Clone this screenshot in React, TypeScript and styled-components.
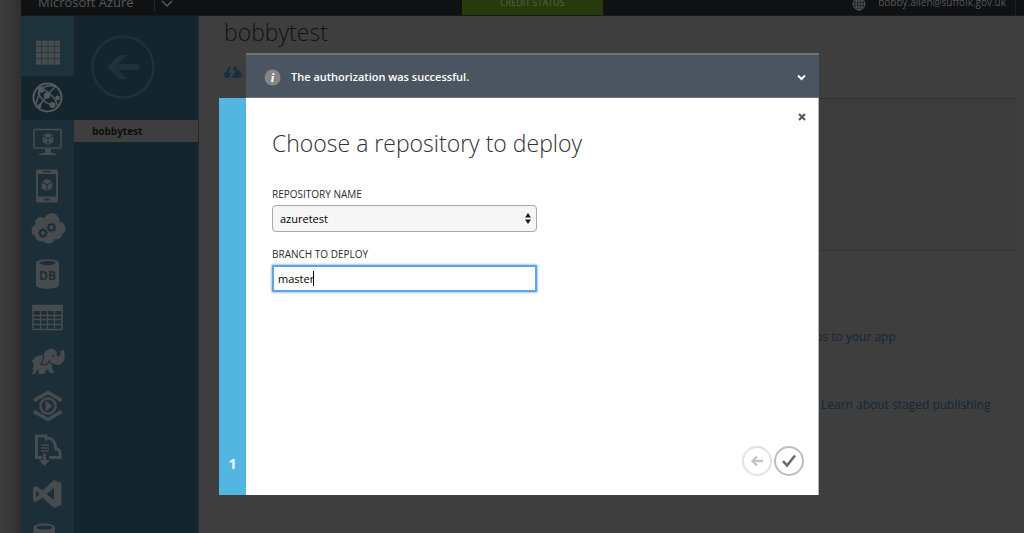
import React from "react";
import styled, { createGlobalStyle, css } from "styled-components";

const sans = `"Open Sans", "Noto Sans", sans-serif`;

const GlobalStyle = createGlobalStyle`
  *, *::before, *::after { box-sizing: border-box; }
  html, body, #root { height: 100%; }
  body {
    margin: 0;
    overflow: hidden;
    background: #3e3e3e;
    font-family: ${sans};
    font-size: 11px;
  }
  h1, h2, p, ul { margin: 0; padding: 0; font-weight: 400; }
  ul { list-style: none; }
  button { border: 0; padding: 0; background: none; font: inherit; color: inherit; }
  svg { display: block; }
`;

/* ---------- portal behind the dialog ---------- */

const Page = styled.div`
  display: flex;
  height: 100vh;
  overflow: hidden;
`;

const Gutter = styled.div`
  flex: 0 0 21px;
  background: linear-gradient(to right, #3c3c3c, #393939 40%, #2f2f2f);
`;

const Portal = styled.div`
  flex: 1;
  min-width: 0;
  display: flex;
  flex-direction: column;
`;

const TopBar = styled.header`
  display: grid;
  grid-template-columns: 16fr 141px 15fr;
  flex: 0 0 40px;
  margin-top: -24px;
  padding-right: 8px;
  background: #0f1113;
  border-bottom: 1px solid #17191b;
  color: #55585a;
`;

const BarGroup = styled.div<{ $end?: boolean }>`
  display: flex;
  align-items: flex-end;
  justify-content: ${(p) => (p.$end ? "flex-end" : "flex-start")};
  gap: 12px;
  padding: ${(p) => (p.$end ? "0 9px 4px 0" : "0 0 4px 17px")};
  border-right: ${(p) => (p.$end ? "1px solid #1d1f21" : "0")};
`;

const Brand = styled.span`
  font-size: 13px;
  line-height: 18px;
  margin-right: 8px;
`;

const Divider = styled.span`
  width: 1px;
  height: 18px;
  background: #24282b;
`;

const BarButton = styled.button`
  margin-left: -6px;
  padding-bottom: 3px;
`;

const Account = styled.span`
  font-size: 10px;
  line-height: 18px;
`;

const Credit = styled.button`
  display: flex;
  align-items: flex-end;
  justify-content: center;
  padding-bottom: 4px;
  background: #263a0c;
  color: #566344;
  font-size: 9px;
  line-height: 16px;
`;

const Columns = styled.div`
  flex: 1;
  min-height: 0;
  display: flex;
`;

const Rail = styled.nav`
  flex: 0 0 53px;
  background: #1c2f38;
  overflow: hidden;
`;

const RailButton = styled.button<{ $active?: boolean; $first?: boolean }>`
  display: flex;
  align-items: center;
  justify-content: center;
  width: 100%;
  height: ${(p) => (p.$first ? 60 : 44)}px;
  padding-top: ${(p) => (p.$first ? 14 : 0)}px;
  color: ${(p) => (p.$active ? "#55595b" : "#474b4d")};
  background: ${(p) => (p.$active ? "#14252e" : p.$first ? "#1e323c" : "transparent")};
`;

const SiteList = styled.div`
  flex: 0 0 124px;
  background: #14252e;
  border-right: 1px solid #1c2b33;
`;

const BackArea = styled.div`
  display: flex;
  justify-content: center;
  height: 104px;
  padding: 19px 26px 0 0;
  color: #1e323c;
`;

const SiteRow = styled.a`
  display: block;
  width: 124px;
  height: 22px;
  padding-left: 18px;
  background: #3e3e3e;
  color: #0e0e0e;
  font-size: 10px;
  font-weight: 700;
  line-height: 22px;
  text-decoration: none;
`;

const Content = styled.main`
  flex: 1;
  min-width: 0;
  padding: 0 8px 0 25px;
`;

const SiteTitle = styled.h1`
  font-size: 23px;
  font-weight: 300;
  line-height: 32px;
  color: #121212;
`;

const Tabs = styled.div`
  display: flex;
  align-items: flex-start;
  height: 50px;
  padding-top: 18px;
  color: #17303f;
`;

const Panel = styled.section`
  height: 153px;
  border: solid #333333;
  border-width: 1px 0;
  background: #3c3c3c;
`;

const LinkRow = styled.p<{ $indent: number; $top: number }>`
  padding: ${(p) => p.$top}px 0 0 ${(p) => p.$indent}px;
  white-space: nowrap;
  font-size: 12px;
  line-height: 18px;

  a { color: #14273a; text-decoration: none; }
`;

/* ---------- dialog ---------- */

const Overlay = styled.div`
  position: fixed;
  inset: 0;
  display: flex;
  align-items: flex-start;
  justify-content: center;
  padding: 53px 8px 0 22px;
`;

const Dialog = styled.section`
  display: grid;
  grid-template-columns: 27px 1fr;
  grid-template-rows: 45px 397px;
  width: 60%;
  min-width: 600px;
`;

const Notice = styled.div`
  grid-column: 2;
  display: flex;
  align-items: center;
  gap: 10px;
  padding: 2px 13px 0 18px;
  border-top: 2px solid #6f7071;
  border-bottom: 1px solid #6d7681;
  background: #4a5561;
  color: #ffffff;
`;

const NoticeText = styled.p`
  flex: 1;
  font-size: 11px;
  font-weight: 600;
  line-height: 16px;
`;

const StepStrip = styled.div`
  display: flex;
  align-items: flex-end;
  justify-content: center;
  padding-bottom: 21px;
  background: #52b6e1;
  color: #e9f6fc;
  font-size: 15px;
  font-weight: 700;
  line-height: 22px;
`;

const Body = styled.form`
  display: flex;
  flex-direction: column;
  padding: 14px 11px 19px 26px;
  border-right: 1px solid #b4b4b4;
  background: #ffffff;
`;

const CloseButton = styled.button`
  align-self: flex-end;
  width: 10px;
  height: 10px;
  color: #555555;
`;

const Heading = styled.h2`
  margin-bottom: 24px;
  font-size: 23px;
  font-weight: 300;
  line-height: 42px;
  color: #303030;
`;

const Field = styled.div`
  width: 265px;
  margin-bottom: 16px;
`;

const Label = styled.label`
  display: block;
  height: 17px;
  font-size: 10px;
  line-height: 12px;
  color: #2b2b2b;
`;

const control = css`
  display: block;
  width: 100%;
  height: 27px;
  margin: 0;
  font-family: ${sans};
  font-size: 11px;
  color: #000000;
`;

const ControlWrap = styled.div`
  position: relative;

  svg {
    position: absolute;
    right: 6px;
    top: 8px;
    pointer-events: none;
  }
`;

const Select = styled.select`
  ${control}
  appearance: none;
  padding: 0 20px 0 7px;
  border: 1px solid #a9a9a9;
  border-radius: 4px;
  background: #f6f6f6;
`;

const TextInput = styled.input`
  ${control}
  padding: 0 4px;
  border: 2px solid #5fa2e8;
  border-radius: 1px;
  outline: 0;
  background: #ffffff;
  box-shadow: 0 0 2px 1px #a9cdf4;
  caret-color: transparent;
`;

const Caret = styled.span`
  position: absolute;
  left: 41px;
  top: 6px;
  width: 1px;
  height: 15px;
  background: #000000;
`;

const Actions = styled.div`
  display: flex;
  justify-content: flex-end;
  gap: 2px;
  margin-top: auto;
  padding-right: 3px;
`;

const RoundButton = styled.button<{ $muted?: boolean }>`
  display: grid;
  place-items: center;
  width: 30px;
  height: 30px;
  border: 2px solid ${(p) => (p.$muted ? "#e2e2e2" : "#bdbdbd")};
  border-radius: 50%;
  color: ${(p) => (p.$muted ? "#c4c4c4" : "#6a6a6a")};
`;

/* ---------- drawings ---------- */

const Cube = ({ x, y, s = 1 }: { x: number; y: number; s?: number }) => (
  <g transform={`translate(${x} ${y}) scale(${s})`} fill="currentColor">
    <path d="M0-6 5-3.4 0-.8-5-3.4Z" />
    <path d="M-5.3-2.5-.5 0v5.8L-5.3 3.2Z" />
    <path d="M5.3-2.5.5 0v5.8L5.3 3.2Z" />
  </g>
);

const Icon = ({ children }: { children: React.ReactNode }) => (
  <svg width="36" height="36" viewBox="0 0 36 36" fill="none" aria-hidden="true">
    {children}
  </svg>
);

const GridIcon = () => (
  <Icon>
    {[0, 1, 2, 3].map((r) =>
      [0, 1, 2, 3].map((c) => (
        <rect key={`${r}${c}`} x={6 + c * 6.2} y={5.5 + r * 6.2} width="5.5" height="5.5" fill="currentColor" />
      ))
    )}
  </Icon>
);

const WebIcon = () => (
  <Icon>
    <circle cx="17.500" cy="17.500" r="14" stroke="currentColor" strokeWidth="2" />
    <g stroke="currentColor" strokeWidth="1.500">
      <path d="M11 9C17 10 26 17 28 28M11 9c4-3 10-4 15-2M10 11 6 24M8 12c2 7 8 12 15 13M17 15l8-8M16 17 9 26" />
    </g>
    <g fill="currentColor">
      <circle cx="11" cy="9.500" r="3.200" />
      <circle cx="17" cy="15.500" r="3.200" />
      <circle cx="27.500" cy="18" r="2.400" />
      <circle cx="22.500" cy="25" r="3" />
      <circle cx="9.500" cy="26" r="2.200" />
    </g>
  </Icon>
);

const MonitorIcon = () => (
  <Icon>
    <rect x="4" y="5.500" width="27" height="18.500" rx="1" stroke="currentColor" strokeWidth="1.600" />
    <Cube x={18} y={15} />
    <path d="M15 25h6v3c0 1 1 1.500 5 1.800V31H9v-1.200c5-.3 6-.8 6-1.800Z" fill="currentColor" />
  </Icon>
);

const PhoneIcon = () => (
  <Icon>
    <path
      fillRule="evenodd"
      fill="currentColor"
      d="M8 1.500h18a2 2 0 0 1 2 2v29a2 2 0 0 1-2 2H8a2 2 0 0 1-2-2v-29a2 2 0 0 1 2-2ZM8 6v22.500h18V6ZM13 3v1.200h8V3Zm1.500 27.500v2h5v-2Z"
    />
    <Cube x={17} y={17} />
  </Icon>
);

const Gear = ({ x, y }: { x: number; y: number }) => (
  <g transform={`translate(${x} ${y})`} stroke="#1c2f38">
    <circle r="3" strokeWidth="2" />
    <path d="M0-5v2M0 3v2M-5 0h2M3 0h2M-3.500-3.500-2-2M2 2l1.500 1.500M-3.500 3.500-2 2M2-2l1.500-1.500" strokeWidth="1.500" />
  </g>
);

const CloudGearsIcon = () => (
  <Icon>
    <path
      fill="currentColor"
      d="M5 24A6 6 0 0 1 5.500 13 5.500 5.500 0 0 1 14 6.500 8 8 0 0 1 29.500 10a6.500 6.500 0 0 1 3 12 6 6 0 0 1-7.500 5 7 7 0 0 1-12 2A6 6 0 0 1 5 24Z"
    />
    <Gear x={13} y={21} />
    <Gear x={21.5} y={15.500} />
  </Icon>
);

const DatabaseIcon = () => (
  <Icon>
    <path fill="currentColor" d="M6 7C6 2 29 2 29 7v22c0 5-23 5-23 0Z" />
    <ellipse cx="17.500" cy="7" rx="8" ry="2.200" fill="#1c2f38" />
    <text x="17.500" y="24" textAnchor="middle" fontFamily="Open Sans, sans-serif" fontSize="12" fontWeight="700" fill="#1c2f38">
      DB
    </text>
  </Icon>
);

const TableIcon = () => (
  <Icon>
    <rect x="3" y="5.500" width="29" height="24" stroke="currentColor" strokeWidth="1.500" />
    <path d="M2.500 5H33v6H2.500Z" fill="currentColor" />
    <path d="M3 15.500h29M3 19.500h29M3 24.500h29M10.500 11v18M17.500 11v18M24.500 11v18" stroke="currentColor" strokeWidth="1.300" />
  </Icon>
);

const ElephantIcon = () => (
  <Icon>
    <path
      fill="currentColor"
      d="M3 18c0-4 4-7 10-7 2-4 6-7 10-6 3 1 4 3 4 7 3 1 4-1 3-5l4-1c2 8 0 14-6 15-2 0-4-1-5-2l-1 4 2 6h-4l-3-4-3 5h-5l-1-5-3 5H2l2-5-2 1 2-5-3-6 2 1Z"
    />
    <path d="M14 11c-1 4-1 7-3 9 4 2 7 0 9-4M20 18c1 2 3 4 5 4" stroke="#1c2f38" strokeWidth="1.200" />
    <circle cx="23" cy="12" r="1" fill="#1c2f38" />
  </Icon>
);

const MediaIcon = () => (
  <Icon>
    <path d="M5.500 13.500V11.500L18 4.500l12 7v2M5.500 22.500v2l12.500 7 12-7v-2" stroke="currentColor" strokeWidth="3.600" />
    <circle cx="18" cy="18" r="7.600" stroke="currentColor" strokeWidth="2.400" />
    <path d="m15.500 12.500 7 5.500-7 5.500Z" fill="currentColor" />
  </Icon>
);

const ImportIcon = () => (
  <Icon>
    <path d="M16 8.500V4H6.500v21.500H12M17 6c6 0 8 4 9 11 3 0 4 2 4 4v4.500H19" stroke="currentColor" strokeWidth="3" />
    <path d="M11 13h8M11 16h8M11 19h8" stroke="currentColor" strokeWidth="1.700" />
    <path d="M13 21.500h3V28h4l-5.500 6L9 28h4Z" fill="currentColor" />
  </Icon>
);

const StudioIcon = () => (
  <Icon>
    <path
      fillRule="evenodd"
      fill="currentColor"
      d="M24 4 31.500 7v22L24 32 12.500 21.500 6 26l-3-1.500v-13L6 10l6.500 4.500ZM24 12l-7.500 6 7.500 6ZM6 14.500v7l3.500-3.500Z"
    />
  </Icon>
);

const CacheIcon = () => (
  <Icon>
    <path fill="currentColor" d="M3.500 7.500C3.500 2 25 2 25 7.500V32H3.500Z" />
    <ellipse cx="14.500" cy="7.500" rx="8" ry="2" fill="#1c2f38" />
  </Icon>
);

const railItems = [
  { label: "All items", icon: <GridIcon />, first: true },
  { label: "Web apps", icon: <WebIcon />, active: true },
  { label: "Virtual machines", icon: <MonitorIcon /> },
  { label: "Mobile services", icon: <PhoneIcon /> },
  { label: "Cloud services", icon: <CloudGearsIcon /> },
  { label: "SQL databases", icon: <DatabaseIcon /> },
  { label: "Storage", icon: <TableIcon /> },
  { label: "HDInsight", icon: <ElephantIcon /> },
  { label: "Media services", icon: <MediaIcon /> },
  { label: "Service bus", icon: <ImportIcon /> },
  { label: "Visual Studio Online", icon: <StudioIcon /> },
  { label: "Cache", icon: <CacheIcon /> },
];

export default function App() {
  return (
    <>
      <GlobalStyle />
      <Page>
        <Gutter />
        <Portal>
          <TopBar>
            <BarGroup>
              <Brand>Microsoft Azure</Brand>
              <Divider />
              <BarButton type="button" aria-label="Switch portal">
                <svg width="12" height="8" viewBox="0 0 12 8" fill="none" stroke="currentColor" strokeWidth="1.500">
                  <path d="m1 1 5 5 5-5" />
                </svg>
              </BarButton>
            </BarGroup>
            <Credit type="button">CREDIT STATUS</Credit>
            <BarGroup $end>
              <svg width="14" height="14" viewBox="0 0 14 14" fill="none" stroke="currentColor">
                <circle cx="7" cy="7" r="6" />
                <ellipse cx="7" cy="7" rx="3" ry="6" />
                <path d="M7 1v12M1 7h12M2 4h10M2 10h10" />
              </svg>
              <Account>bobby.allen@suffolk.gov.uk</Account>
            </BarGroup>
          </TopBar>
          <Columns>
            <Rail>
              {railItems.map((item) => (
                <RailButton key={item.label} type="button" aria-label={item.label} $active={item.active} $first={item.first}>
                  {item.icon}
                </RailButton>
              ))}
            </Rail>
            <SiteList>
              <BackArea>
                <svg width="64" height="64" viewBox="0 0 64 64" fill="none" stroke="currentColor" aria-hidden="true">
                  <circle cx="32" cy="32" r="30.500" strokeWidth="2.500" />
                  <path d="M48 32H20" strokeWidth="6" />
                  <path d="m36 20-8 0-12 12 12 12h8L24 32Z" fill="currentColor" stroke="none" />
                </svg>
              </BackArea>
              <SiteRow href="#">bobbytest</SiteRow>
            </SiteList>
            <Content>
              <SiteTitle>bobbytest</SiteTitle>
              <Tabs>
                <svg width="18" height="12" viewBox="0 0 18 12" aria-hidden="true">
                  <path fill="currentColor" d="M7 0 4 7h3l-2 5H3C-1 12-1 6 3 5 3 2 5 0 7 0Zm2 0c3 0 4 1 5 4 5 1 5 8 1 8H7l5-7H9l1-4Z" />
                </svg>
              </Tabs>
              <Panel />
              <LinkRow $top={77} $indent={591}>
                <a href="#">ps to your app</a>
              </LinkRow>
              <LinkRow $top={50} $indent={597}>
                <a href="#">Learn about staged publishing</a>
              </LinkRow>
            </Content>
          </Columns>
        </Portal>
      </Page>

      <Overlay>
        <Dialog role="dialog" aria-labelledby="dialog-title">
          <Notice role="status">
            <svg width="17" height="17" viewBox="0 0 17 17" aria-hidden="true">
              <circle cx="8.500" cy="8.500" r="8" fill="#858585" />
              <text x="8.500" y="13" textAnchor="middle" fontFamily="Liberation Serif, serif" fontSize="13" fontStyle="italic" fontWeight="700" fill="#ffffff">
                i
              </text>
            </svg>
            <NoticeText>The authorization was successful.</NoticeText>
            <button type="button" aria-label="Collapse notification">
              <svg width="9" height="7" viewBox="0 0 9 7" fill="none" stroke="currentColor" strokeWidth="2">
                <path d="m1 1.500 3.500 3.500L8 1.500" />
              </svg>
            </button>
          </Notice>
          <StepStrip>1</StepStrip>
          <Body onSubmit={(e) => e.preventDefault()}>
            <CloseButton type="button" aria-label="Close">
              <svg width="10" height="10" viewBox="0 0 10 10" fill="none" stroke="currentColor" strokeWidth="2">
                <path d="m2 2 6 6M8 2 2 8" />
              </svg>
            </CloseButton>
            <Heading id="dialog-title">Choose a repository to deploy</Heading>
            <Field>
              <Label htmlFor="repository">REPOSITORY NAME</Label>
              <ControlWrap>
                <Select id="repository" defaultValue="azuretest">
                  <option value="azuretest">azuretest</option>
                </Select>
                <svg width="6" height="11" viewBox="0 0 6 11" fill="#1a1a1a" aria-hidden="true">
                  <path d="M3 0 6 4.500H0ZM3 11 0 6.500h6Z" />
                </svg>
              </ControlWrap>
            </Field>
            <Field>
              <Label htmlFor="branch">BRANCH TO DEPLOY</Label>
              <ControlWrap>
                <TextInput id="branch" type="text" defaultValue="master" autoFocus />
                <Caret />
              </ControlWrap>
            </Field>
            <Actions>
              <RoundButton type="button" aria-label="Back" $muted>
                <svg width="14" height="12" viewBox="0 0 14 12" fill="none" stroke="currentColor" strokeWidth="2.400">
                  <path d="M13 6H2M7 1.500 2.500 6 7 10.500" />
                </svg>
              </RoundButton>
              <RoundButton type="submit" aria-label="Finish">
                <svg width="16" height="14" viewBox="0 0 16 14" fill="none" stroke="currentColor" strokeWidth="2.600">
                  <path d="m2 7 4 4.500L14 1.500" />
                </svg>
              </RoundButton>
            </Actions>
          </Body>
        </Dialog>
      </Overlay>
    </>
  );
}
